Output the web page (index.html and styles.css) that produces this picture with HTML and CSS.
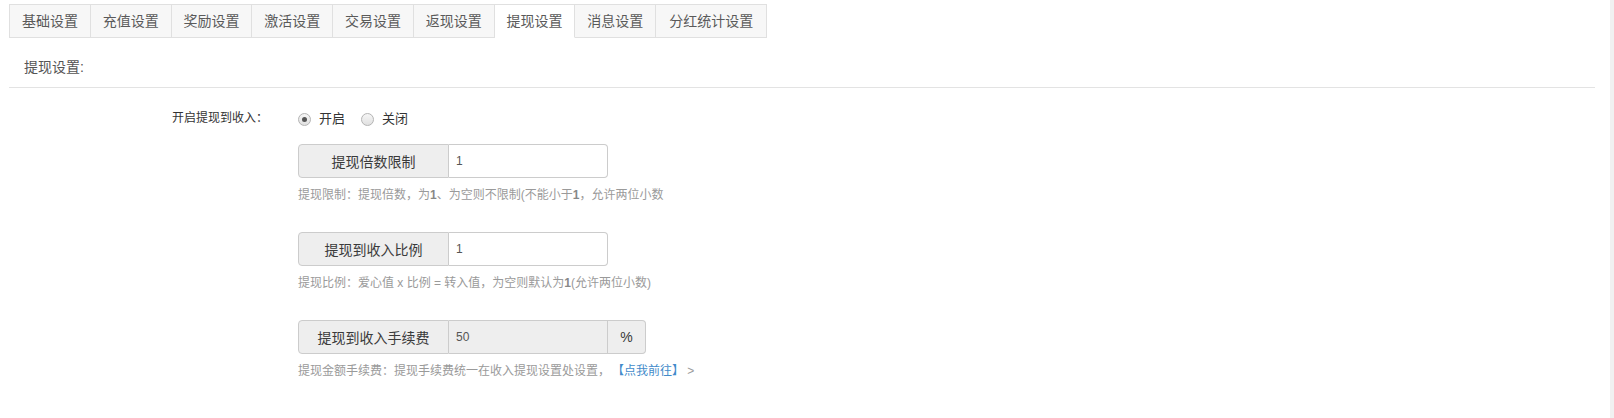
FILE: index.html
```html
<!DOCTYPE html>
<html lang="zh-CN">
<head>
<meta charset="utf-8">
<title>提现设置</title>
<link rel="stylesheet" href="styles.css">
</head>
<body>
<div class="page">
  <div class="main">
    <ul class="tabs">
      <li class="tab">基础设置</li>
      <li class="tab">充值设置</li>
      <li class="tab">奖励设置</li>
      <li class="tab">激活设置</li>
      <li class="tab">交易设置</li>
      <li class="tab">返现设置</li>
      <li class="tab active">提现设置</li>
      <li class="tab">消息设置</li>
      <li class="tab">分红统计设置</li>
    </ul>
    <div class="panel-head">提现设置:</div>
    <form class="form">
      <div class="form-row">
        <label class="row-label">开启提现到收入：</label>
        <div class="row-body">
          <div class="radios">
            <span class="radio"><span class="radio-dot checked"></span>开启</span>
            <span class="radio"><span class="radio-dot"></span>关闭</span>
          </div>
          <div class="group">
            <span class="addon">提现倍数限制</span>
            <input class="field" type="text" value="1">
          </div>
          <p class="help">提现限制：提现倍数，为<b class="num">1</b>、为空则不限制(不能小于<b class="num">1</b>，允许两位小数</p>
          <div class="group">
            <span class="addon">提现到收入比例</span>
            <input class="field" type="text" value="1">
          </div>
          <p class="help">提现比例：爱心值 x 比例 = 转入值，为空则默认为<b class="num">1</b>(允许两位小数)</p>
          <div class="group">
            <span class="addon">提现到收入手续费</span>
            <input class="field field-readonly" type="text" value="50" readonly>
            <span class="addon addon-end">%</span>
          </div>
          <p class="help">提现金额手续费：提现手续费统一在收入提现设置处设置，<a class="link">【点我前往】</a> &gt;</p>
        </div>
      </div>
    </form>
  </div>
  <div class="strip"></div>
</div>
</body>
</html>
```
FILE: styles.css
```css
html, body {
  margin: 0;
  padding: 0;
  background: #fff;
}
body {
  font-family: "Liberation Sans", "Noto Sans CJK SC", sans-serif;
  color: #333;
}
.page {
  display: flex;
  min-height: 100vh;
}
.main {
  flex: 1;
  padding: 0 15px 0 9px;
}
.strip {
  width: 4px;
  background: #f1f1f1;
}
.tabs {
  display: flex;
  margin: 4px 0 0;
  padding: 0;
  list-style: none;
}
.tab {
  height: 32px;
  line-height: 32px;
  padding: 0 11.9px;
  border: 1px solid #e0e0e0;
  border-left: none;
  background: #f7f7f7;
  font-size: 14px;
  color: #5a5a5a;
}
.tab:first-child {
  border-left: 1px solid #e0e0e0;
}
.tab:last-child {
  padding: 0 12.9px;
}
.tab.active {
  background: #fff;
  border-bottom-color: #fff;
}
.panel-head {
  padding: 19px 15px 10px;
  font-size: 14px;
  line-height: 20px;
  color: #555;
  border-bottom: 1px solid #e3e3e3;
}
.form {
  margin: 0;
}
.form-row {
  display: grid;
  grid-template-columns: 259px 1fr;
  column-gap: 30px;
  padding-top: 20px;
}
.row-label {
  text-align: right;
  font-size: 12px;
  line-height: 20px;
  color: #333;
}
.radios {
  display: flex;
  align-items: center;
  height: 20px;
  margin-top: 1px;
  margin-bottom: 15px;
}
.radio {
  display: inline-flex;
  align-items: center;
  margin-right: 16px;
  font-size: 13px;
  line-height: 20px;
  color: #333;
}
.radio-dot {
  position: relative;
  width: 11px;
  height: 11px;
  border: 1px solid #b4b4b4;
  border-radius: 50%;
  background: linear-gradient(#f6f6f6, #e0e0e0);
  margin-right: 8px;
}
.radio-dot.checked::after {
  content: "";
  position: absolute;
  left: 3px;
  top: 3px;
  width: 5px;
  height: 5px;
  border-radius: 50%;
  background: #555;
}
.group {
  display: flex;
  height: 34px;
}
.addon {
  box-sizing: border-box;
  width: 151px;
  height: 34px;
  border: 1px solid #ccc;
  border-radius: 4px 0 0 4px;
  background: #eee;
  display: flex;
  align-items: center;
  justify-content: center;
  font-size: 14px;
  color: #3a3a3a;
}
.addon-end {
  width: 38px;
  border-left: none;
  border-radius: 0 4px 4px 0;
}
.field {
  box-sizing: border-box;
  width: 159px;
  height: 34px;
  margin: 0;
  border: 1px solid #ccc;
  border-left: none;
  border-radius: 0;
  padding: 0 7px;
  font-family: "Liberation Sans", "Noto Sans CJK SC", sans-serif;
  font-size: 12px;
  color: #555;
  background: #fff;
  outline: none;
}
.group .field:last-child {
  border-radius: 0 4px 4px 0;
}
.field-readonly {
  background: #eee;
}
.help {
  margin: 7px 0 27px;
  font-size: 12px;
  line-height: 20px;
  color: #9a9a9a;
}
.num {
  font-weight: bold;
  color: #888;
}
.link {
  color: #428bca;
  margin-left: 8px;
  text-decoration: none;
}
```
